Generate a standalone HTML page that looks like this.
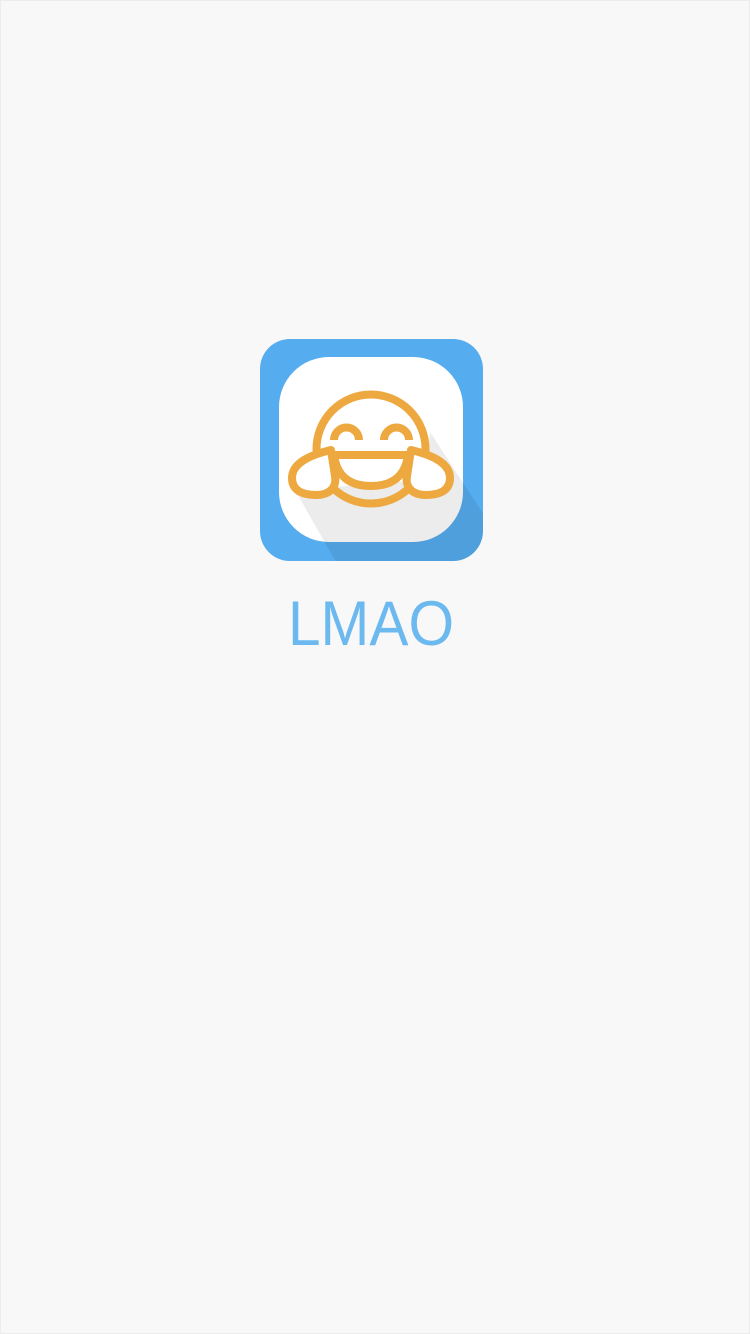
<!DOCTYPE html>
<html><head><meta charset="utf-8"><style>
html,body{margin:0;padding:0;width:750px;height:1334px;background:#f8f8f8;overflow:hidden}
.b{position:absolute;left:0;top:0;width:748px;height:1332px;border:1px solid #ececec}
.t{position:absolute;left:0;width:742px;top:588px;text-align:center;font-family:"Liberation Sans",sans-serif;font-size:63px;color:#6cb9ef;line-height:72px;transform:scaleX(0.93);transform-origin:371px 0}
</style></head><body>
<div class="b"></div>
<svg width="750" height="1334" style="position:absolute;left:0;top:0">
<defs><clipPath id="c"><rect x="260" y="339" width="223" height="222" rx="30"/></clipPath></defs>
<rect x="260" y="339" width="223" height="222" rx="30" fill="#55acee"/>
<rect x="279" y="357" width="184" height="185" rx="50" fill="#fff"/>
<polygon clip-path="url(#c)" points="295,490 336,562 484,562 484,515 430,432 425,480" fill="#000" opacity="0.075"/>
<g fill="none" stroke="#eda940" stroke-width="8" stroke-linejoin="round">
<circle cx="371" cy="449" r="54.5"/>
<path d="M334,455 L408,455 Q404,486 371,486 Q338,486 334,455 Z" fill="#fff"/>
<path d="M334,440 A12.5,12.5 0 0 1 359,440"/>
<path d="M384,440 A12.5,12.5 0 0 1 409,440"/>
<path d="M331,450 C310,455 292,463 292,478 C292,492 305,495 316,495 C330,495 337,487 335,476 Z" fill="#fff"/>
<path d="M411,450 C432,455 450,463 450,478 C450,492 437,495 426,495 C412,495 405,487 407,476 Z" fill="#fff"/>
</g>
</svg>
<div class="t">LMAO</div>
</body></html>
